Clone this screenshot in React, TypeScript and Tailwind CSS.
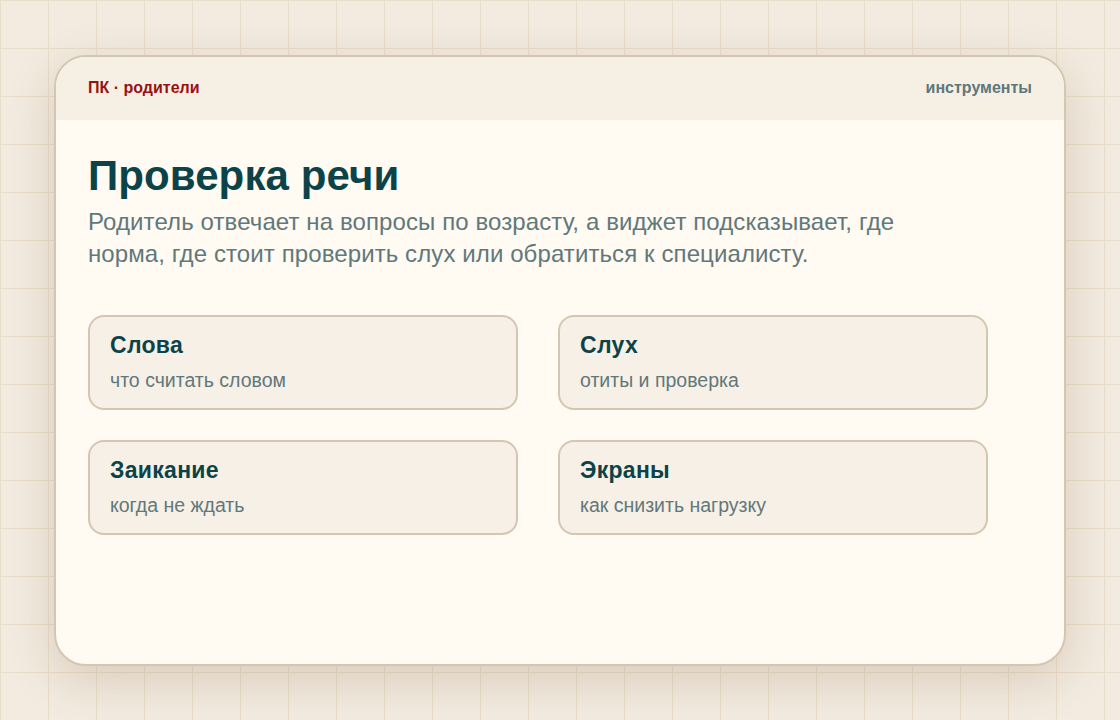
import React from "react";

const items = [
  { t: "Слова", s: "что считать словом" },
  { t: "Слух", s: "отиты и проверка" },
  { t: "Заикание", s: "когда не ждать" },
  { t: "Экраны", s: "как снизить нагрузку" },
];

export default function App() {
  return (
    <div
      className="w-[1120px] h-[720px] flex items-center justify-center bg-[#f3ebe0] bg-[linear-gradient(to_right,#e8dcca_1px,transparent_1px),linear-gradient(to_bottom,#e8dcca_1px,transparent_1px)] bg-[size:48px_48px]"
      style={{ fontFamily: '"Liberation Sans", Arial, sans-serif' }}
    >
      <div className="w-[1012px] h-[611px] rounded-[32px] border-2 border-[#d5c6b1] bg-[#fffaf2] overflow-hidden shadow-[0_14px_48px_rgba(110,80,40,0.2)] flex flex-col">
        <div className="h-[63px] shrink-0 bg-[#f6efe4] flex items-center justify-between px-[32px]">
          <span className="text-[16px] font-bold text-[#9a1111]">ПК · родители</span>
          <span className="text-[16px] font-bold text-[#5f777a]">инструменты</span>
        </div>
        <div className="px-[32px] pt-[32px]">
          <h1 className="text-[42px] leading-[48px] font-bold tracking-[0.1px] text-[#0b4349]">Проверка речи</h1>
          <p className="mt-[6px] max-w-[860px] text-[24px] leading-[32px] tracking-[0.1px] text-[#61787b]">
            Родитель отвечает на вопросы по возрасту, а виджет подсказывает, где норма, где стоит проверить слух или обратиться к специалисту.
          </p>
          <div className="mt-[45px] w-[900px] grid grid-cols-2 gap-x-10 gap-y-[30px]">
            {items.map((it) => (
              <div
                key={it.t}
                className="h-[95px] rounded-[16px] border-2 border-[#d5c6b1] bg-[#f7f0e6] px-5 pt-[14px]"
              >
                <div className="text-[23px] leading-[28px] font-bold tracking-[0.3px] text-[#0b4349]">{it.t}</div>
                <div className="mt-[9px] text-[19.5px] leading-[24px] text-[#61787b]">{it.s}</div>
              </div>
            ))}
          </div>
        </div>
      </div>
    </div>
  );
}
